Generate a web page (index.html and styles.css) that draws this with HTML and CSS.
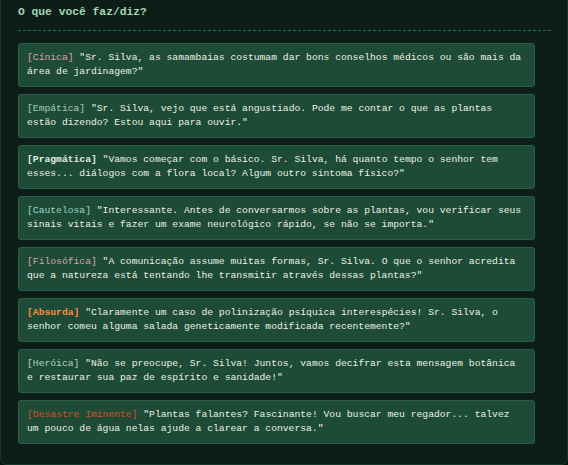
FILE: index.html
```html
<!DOCTYPE html>
<html lang="pt">
<head>
<meta charset="utf-8">
<title>O que você faz/diz?</title>
<link rel="stylesheet" href="styles.css">
</head>
<body>
<div class="panel">
  <h2 class="title">O que você faz/diz?</h2>
  <ul class="choices">
    <li class="choice"><span class="tag cinica">[Cínica]</span> <span class="line">"Sr. Silva, as samambaias costumam dar bons conselhos médicos ou são mais da área de jardinagem?"</span></li>
    <li class="choice"><span class="tag empatica">[Empática]</span> <span class="line">"Sr. Silva, vejo que está angustiado. Pode me contar o que as plantas estão dizendo? Estou aqui para ouvir."</span></li>
    <li class="choice"><span class="tag pragmatica">[Pragmática]</span> <span class="line">"Vamos começar com o básico. Sr. Silva, há quanto tempo o senhor tem esses... diálogos com a flora local? Algum outro sintoma físico?"</span></li>
    <li class="choice"><span class="tag cautelosa">[Cautelosa]</span> <span class="line">"Interessante. Antes de conversarmos sobre as plantas, vou verificar seus sinais vitais e fazer um exame neurológico rápido, se não se importa."</span></li>
    <li class="choice"><span class="tag filosofica">[Filosófica]</span> <span class="line">"A comunicação assume muitas formas, Sr. Silva. O que o senhor acredita que a natureza está tentando lhe transmitir através dessas plantas?"</span></li>
    <li class="choice"><span class="tag absurda">[Absurda]</span> <span class="line">"Claramente um caso de polinização psíquica interespécies! Sr. Silva, o senhor comeu alguma salada geneticamente modificada recentemente?"</span></li>
    <li class="choice"><span class="tag heroica">[Heróica]</span> <span class="line">"Não se preocupe, Sr. Silva! Juntos, vamos decifrar esta mensagem botânica e restaurar sua paz de espírito e sanidade!"</span></li>
    <li class="choice"><span class="tag desastre">[Desastre Iminente]</span> <span class="line">"Plantas falantes? Fascinante! Vou buscar meu regador... talvez um pouco de água nelas ajude a clarear a conversa."</span></li>
  </ul>
</div>
</body>
</html>
```

FILE: styles.css
```css
* { box-sizing: border-box; }
html, body {
  margin: 0;
  padding: 0;
  background: #09180f;
}
body {
  width: 568px;
  height: 465px;
  overflow: hidden;
  font-family: "Liberation Mono", "DejaVu Sans Mono", monospace;
}
.panel {
  height: 465px;
  background: #0c1e17;
  border: 1px solid #17362a;
  border-top: none;
  border-radius: 0 0 7px 7px;
  padding: 4px 16px 0 17px;
}
.title {
  margin: 0;
  font-size: 11.3px;
  line-height: 16px;
  font-weight: bold;
  color: #a2d8b6;
  padding-bottom: 10px;
  border-bottom: 1px dashed #2d6a4f;
}
.choices {
  list-style: none;
  margin: 12px 0 0 0;
  padding: 0 16px 0 0;
  display: flex;
  flex-direction: column;
  gap: 7px;
}
.choice {
  background: #1d4b38;
  border: 1px solid #2a5e47;
  border-radius: 3px;
  padding: 7px 8px;
  font-size: 9.7px;
  line-height: 14px;
  color: #eef1e2;
  min-height: 44px;
}
.tag.cinica { color: #e3a0a0; }
.tag.empatica { color: #a9c9b5; }
.tag.pragmatica { color: #e6ece2; font-weight: bold; }
.tag.cautelosa { color: #9fd2c2; }
.tag.filosofica { color: #dba3a8; }
.tag.absurda { color: #ff8a38; font-weight: bold; }
.tag.heroica { color: #b6d0c0; }
.tag.desastre { color: #d2521f; }
```
